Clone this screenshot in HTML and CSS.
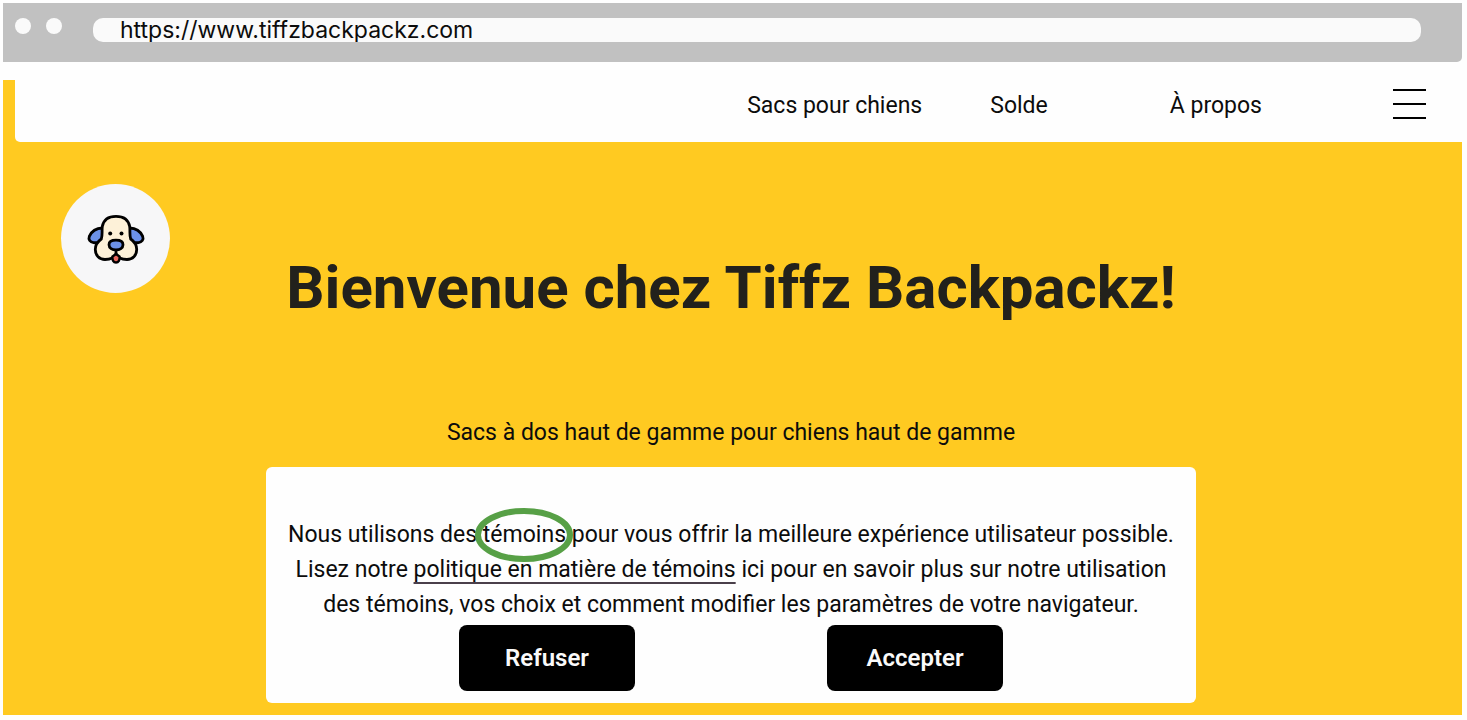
FILE: index.html
```
<!DOCTYPE html>
<html lang="fr">
<head>
    <meta charset="UTF-8">
    <meta name="viewport" content="width=device-width, initial-scale=1.0">
    <title>Tiffz Backpackz</title>
    <link rel="stylesheet" href="styles.css">
</head>
<body>
    <div class="browser-bar">
        <span class="dot"></span>
        <span class="dot"></span>
        <input class="address" type="text" aria-label="Adresse" value="https://www.tiffzbackpackz.com">
    </div>

    <div class="site">
        <nav class="navbar">
            <a class="nav-bags" href="#">Sacs pour chiens</a>
            <a class="nav-sale" href="#">Solde</a>
            <a class="nav-about" href="#">À propos</a>
            <button class="menu-button" type="button" aria-label="Menu">
                <span></span>
                <span></span>
                <span></span>
            </button>
        </nav>

        <main class="content">
            <header class="hero">
                <a class="logo" href="#" aria-label="Accueil">
                    <svg viewBox="1 0 70 65" width="70" height="65" fill="none" stroke="#000" stroke-width="2.8" stroke-linejoin="round" stroke-linecap="round">
                        <path fill="#6c91e8" d="M22.500 22c-6 .2-10.800 3-13.200 8.400-1.200 3 .8 5.800 4.200 6.200 4.500.6 8-1 9-4.200z"/>
                        <path fill="#6c91e8" d="M49.500 22c6 .2 10.800 3 13.200 8.400 1.200 3-.8 5.800-4.200 6.200-4.500.6-8-1-9-4.200z"/>
                        <path fill="#fdf1d8" d="M36 10.300c-7.500 0-12.500 3.700-13.700 10.200-.6 4.500.4 8.500-1 12.500-3.500 2.500-6 6-6 10.500 0 6 4.200 10 9.700 10 5 0 9.500-2 11-5.500 1.500 3.500 6 5.500 11 5.500 5.500 0 9.700-4 9.700-10 0-4.500-2.500-8-6-10.500-1.400-4-.4-8-1-12.500-1.200-6.500-6.200-10.200-13.700-10.200z"/>
                        <path fill="#e8655c" stroke-width="2.400" d="M36 48l-3.500 2.500c-.5 3.500 1 6 3.500 6s4-2.500 3.500-6z"/>
                        <path d="M36 44v4"/>
                        <path fill="#6c91e8" d="M36 34.200c-4.500 0-7 1.800-7 4.500 0 3.300 3.300 5.100 7 5.100s7-1.800 7-5.100c0-2.700-2.500-4.500-7-4.500z"/>
                        <circle cx="30.200" cy="27.400" r="2" fill="#000" stroke="none"/>
                        <circle cx="41.500" cy="27.400" r="2" fill="#000" stroke="none"/>
                    </svg>
                </a>
                <h1>Bienvenue chez Tiffz Backpackz!</h1>
            </header>

            <p class="tagline">Sacs à dos haut de gamme pour chiens haut de gamme</p>

            <section class="cookie-banner" aria-label="Témoins">
                <p class="cookie-text">
                    Nous utilisons des <span class="circled">témoins<svg class="ring" viewBox="0 0 98 54" fill="none" aria-hidden="true"><ellipse cx="49" cy="27" rx="46" ry="24" stroke="#57a046" stroke-width="6"/></svg></span> pour vous offrir la meilleure expérience utilisateur possible.<br>
                    Lisez notre <a href="#">politique en matière de témoins</a> ici pour en savoir plus sur notre utilisation<br>
                    des témoins, vos choix et comment modifier les paramètres de votre navigateur.
                </p>
                <div class="cookie-actions">
                    <button type="button">Refuser</button>
                    <button type="button">Accepter</button>
                </div>
            </section>
        </main>
    </div>
</body>
</html>
```

FILE: styles.css
```
* {
    box-sizing: border-box;
}

body {
    margin: 0;
    padding: 3px 5px 5px 3px;
    background-color: #fefefe;
    color: #0c0c0c;
    font-family: Roboto, 'Liberation Sans', sans-serif;
    font-size: 23px;
}

a {
    color: inherit;
    text-decoration: none;
}

.browser-bar {
    display: flex;
    align-items: flex-start;
    height: 59px;
    padding: 15px 41px 0 12px;
    background-color: #c1c1c1;
    border-radius: 0 0 5px 0;
}

.dot {
    width: 16px;
    height: 16px;
    margin-right: 15px;
    background-color: #fafafa;
    border-radius: 50%;
}

.address {
    flex: 1;
    min-width: 0;
    height: 24px;
    margin-left: 16px;
    padding: 0 27px;
    border: none;
    border-radius: 10px;
    background-color: #fafafa;
    color: #0c0c0c;
    font-family: Inter, 'Liberation Sans', sans-serif;
    font-size: 23px;
    line-height: 24px;
}

.site {
    margin-top: 18px;
    padding-bottom: 12px;
    background-color: #ffca21;
}

.navbar {
    display: flex;
    align-items: center;
    justify-content: flex-end;
    height: 62px;
    margin-left: 12px;
    padding: 0 36px 12px 0;
    background-color: #fefefe;
    border-radius: 0 0 0 5px;
}

.nav-bags {
    margin-right: 68px;
}

.nav-sale {
    margin-right: 122px;
}

.nav-about {
    margin-right: 131px;
}

.menu-button {
    display: flex;
    flex-direction: column;
    justify-content: space-between;
    width: 33px;
    height: 30px;
    margin-bottom: 2px;
    padding: 0;
    border: none;
    background: none;
}

.menu-button span {
    height: 2px;
    background-color: #000;
}

.content {
    padding-right: 3px;
}

.hero {
    display: grid;
    grid-template-columns: 1fr auto 1fr;
    padding: 42px 58px 0;
}

.logo {
    display: flex;
    align-items: center;
    justify-content: center;
    width: 109px;
    height: 109px;
    background-color: #f7f7f8;
    border-radius: 50%;
}

h1 {
    margin: 66px 0 0;
    color: #22211c;
    font-size: 60px;
    font-weight: 700;
    line-height: 76px;
    white-space: nowrap;
}

.tagline {
    margin: 93px 0 20px;
    line-height: 28px;
    text-align: center;
}

.cookie-banner {
    width: 930px;
    max-width: 100%;
    margin: 0 auto;
    padding: 50px 0 12px;
    background-color: #fefefe;
    border-radius: 6px;
}

.cookie-text {
    margin: 0;
    line-height: 35px;
    text-align: center;
}

.cookie-text a {
    text-decoration: underline;
    text-decoration-color: #4a3f4a;
    text-decoration-thickness: 2px;
    text-decoration-skip-ink: none;
    text-underline-offset: 5px;
}

.circled {
    position: relative;
}

/* green ring drawn over the word */
.ring {
    position: absolute;
    top: -13px;
    left: -8px;
    width: 98px;
    height: 54px;
}

.cookie-actions {
    display: flex;
    justify-content: center;
    gap: 192px;
    margin-top: 3px;
}

.cookie-actions button {
    width: 176px;
    height: 66px;
    border: none;
    border-radius: 8px;
    background-color: #000;
    color: #fafafa;
    font-family: inherit;
    font-size: 24px;
    font-weight: 600;
}
```
